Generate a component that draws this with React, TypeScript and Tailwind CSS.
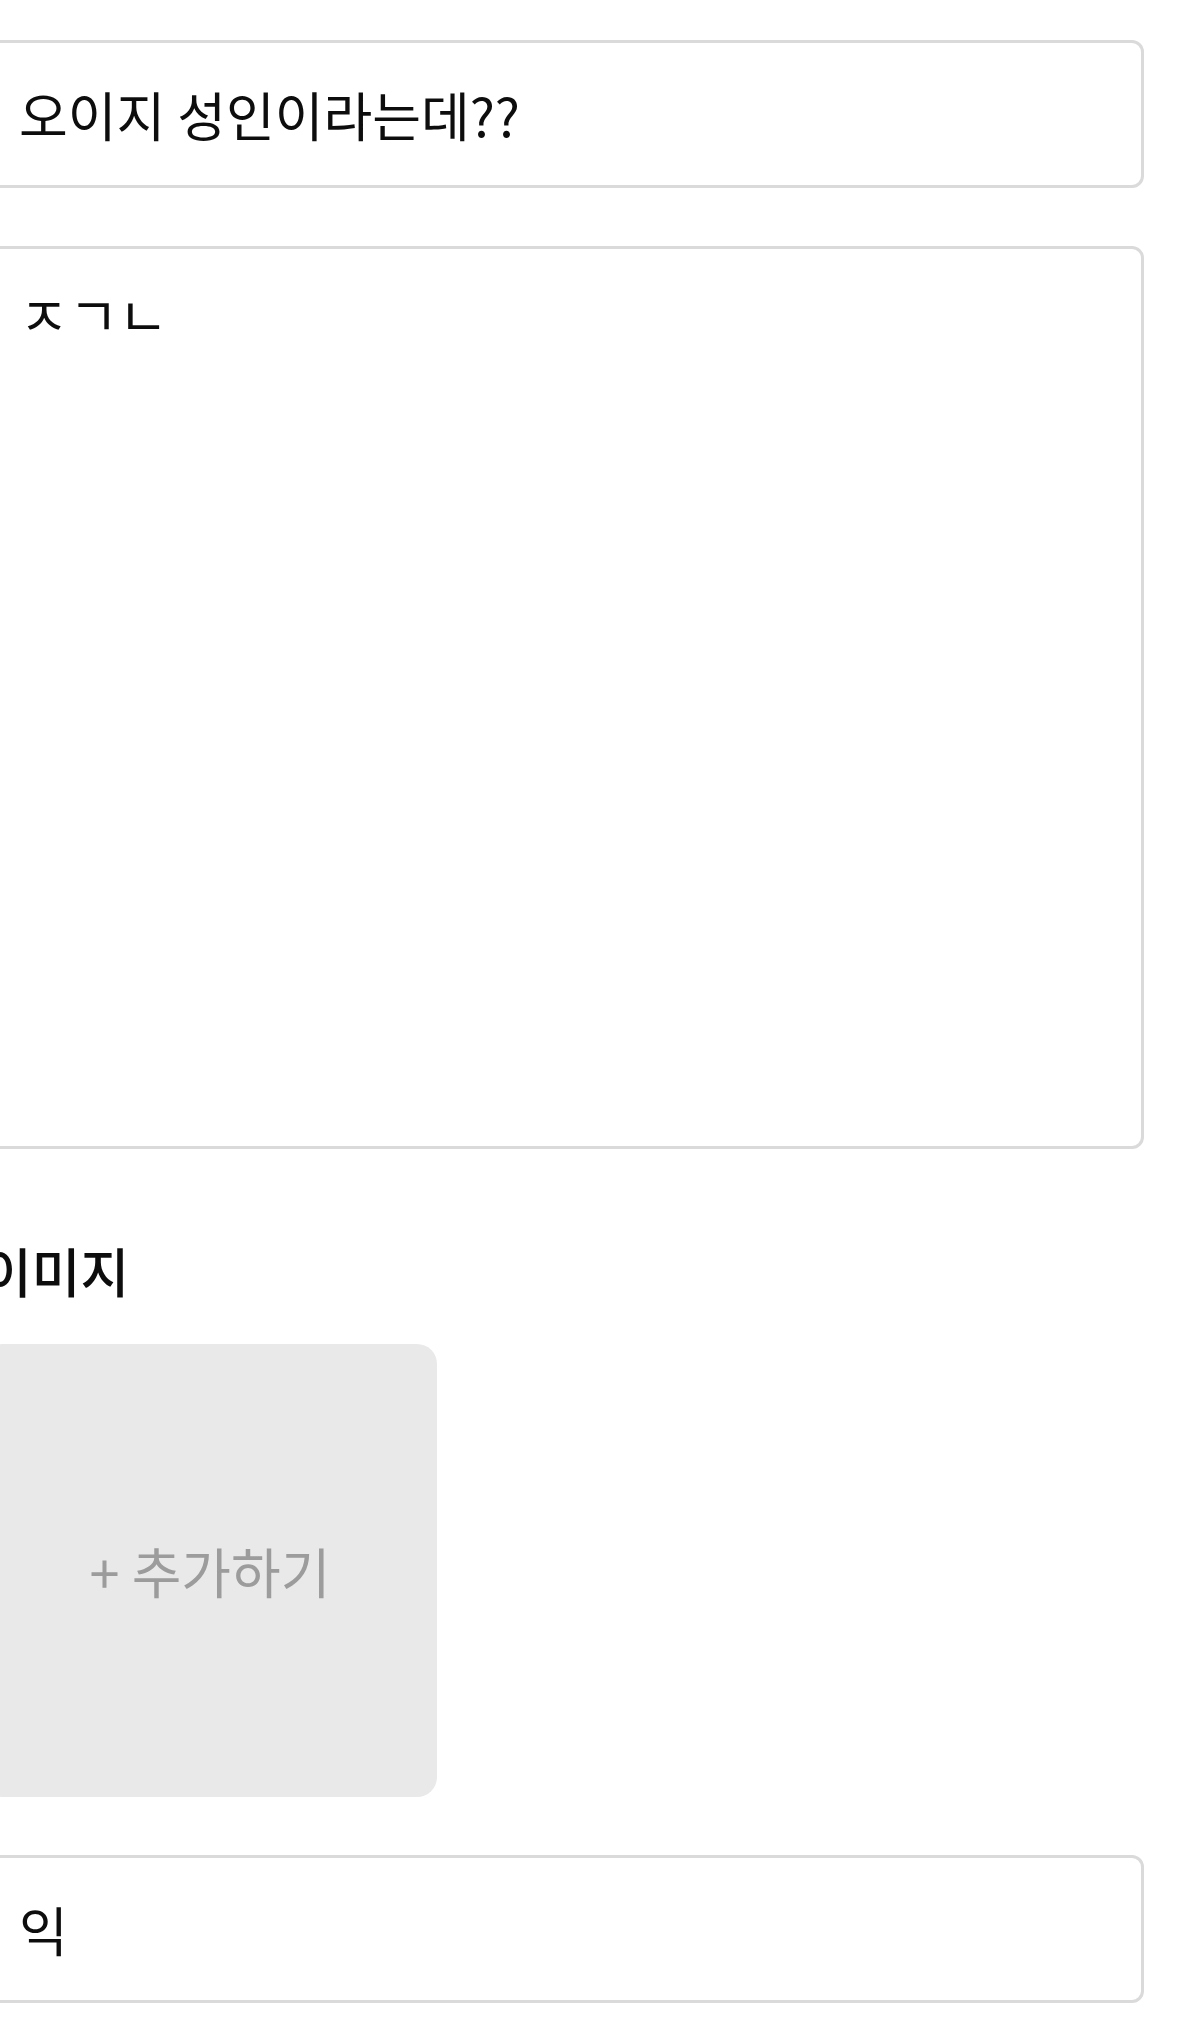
import React from "react";

export default function App() {
  return (
    <div className="min-h-[2017px] w-full overflow-hidden bg-white font-['Noto_Sans_CJK_KR','Noto_Sans',sans-serif]">
      <div className="ml-[-17px] mr-[56px] flex flex-col pt-[40px]">
        <input
          readOnly
          defaultValue="오이지 성인이라는데??"
          className="h-[148px] w-full rounded-[12px] border-[3px] border-[#dadada] bg-white px-[33px] font-['Noto_Sans_CJK_KR','Noto_Sans',sans-serif] text-[53px] leading-[72px] text-[#0d0d0d] outline-none"
        />
        <textarea
          readOnly
          defaultValue="ㅈㄱㄴ"
          className="mt-[58px] h-[903px] w-full resize-none overflow-hidden rounded-[12px] border-[3px] border-[#dadada] bg-white px-[33px] pt-[29px] font-['Noto_Sans_CJK_KR','Noto_Sans',sans-serif] text-[54px] leading-[72px] text-[#0d0d0d] outline-none"
        />
        <div className="mt-[86px] mb-[39px] text-[53px] leading-[70px] font-medium text-[#0d0d0d]">
          이미지
        </div>
        <div className="flex h-[453px] w-[454px] items-center justify-center rounded-[20px] bg-[#e9e9e9] text-[54px] leading-[70px] text-[#9c9c9c]">
          + 추가하기
        </div>
        <input
          readOnly
          defaultValue="익"
          className="mt-[58px] h-[148px] w-full rounded-[12px] border-[3px] border-[#dadada] bg-white px-[33px] font-['Noto_Sans_CJK_KR','Noto_Sans',sans-serif] text-[53px] leading-[72px] text-[#0d0d0d] outline-none"
        />
      </div>
    </div>
  );
}
